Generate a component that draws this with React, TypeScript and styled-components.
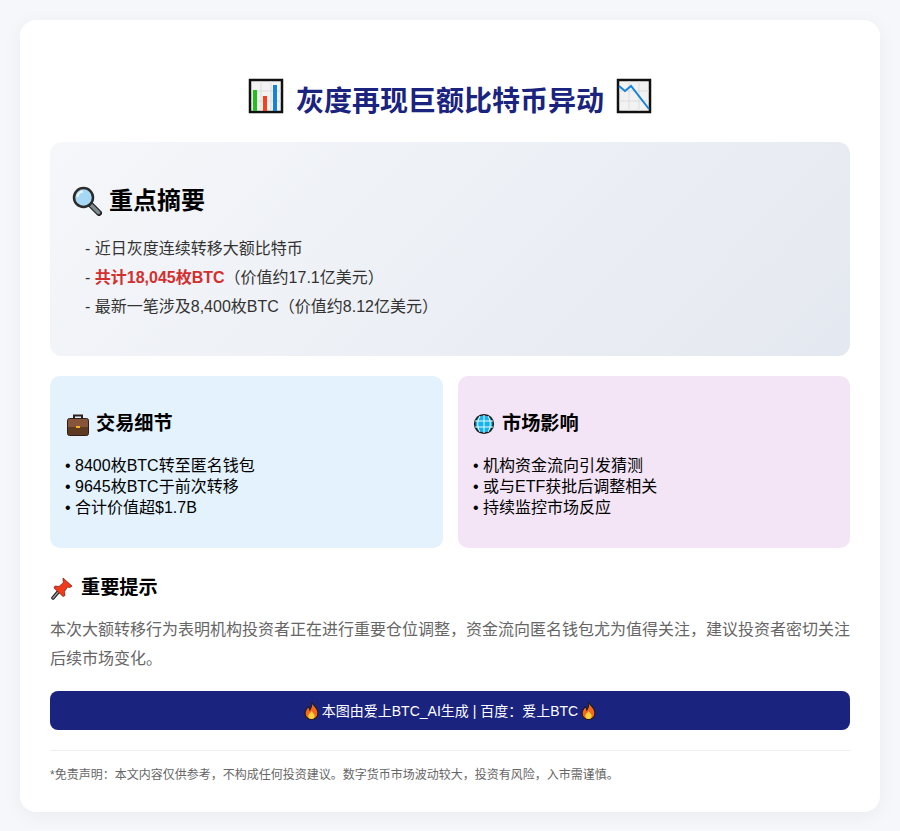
import React, { FC } from 'react'
import styled, { createGlobalStyle } from 'styled-components'

const GlobalStyle = createGlobalStyle`
  html, body { margin: 0; padding: 0; }
  body {
    background: #f5f7fa;
    font-family: "Liberation Sans", "Noto Sans CJK SC", sans-serif;
  }
`

const Page = styled.div`
  padding: 20px;
`

const Card = styled.div`
  background: #fff;
  border-radius: 16px;
  box-shadow: 0 4px 20px rgba(0, 0, 0, 0.05);
  padding: 30px;
  height: 792px;
  box-sizing: border-box;
`

const Title = styled.h1`
  margin: 0;
  height: 92px;
  padding-top: 12px;
  box-sizing: border-box;
  display: flex;
  justify-content: center;
  align-items: center;
  gap: 12px;
  font-size: 28px;
  line-height: 40px;
  font-weight: 700;
  color: #1a237e;

  svg {
    margin-top: -12px;
  }
`

const Summary = styled.section`
  height: 214px;
  box-sizing: border-box;
  padding: 41px 22px 0;
  border-radius: 12px;
  background: linear-gradient(135deg, #f5f7fa 0%, #e4e8f0 100%);
`

const SummaryHeading = styled.h2`
  margin: 0 0 16px;
  display: flex;
  align-items: center;
  gap: 7px;
  font-size: 24px;
  line-height: 36px;
  font-weight: 700;
  color: #000;
`

const SummaryLine = styled.div`
  margin-left: 13px;
  font-size: 16px;
  line-height: 28.8px;
  color: #333;
`

const Red = styled.strong`
  color: #d32f2f;
`

const Columns = styled.div`
  display: grid;
  grid-template-columns: 393px 392px;
  gap: 15px;
  margin-top: 20px;
`

const InfoCard = styled.section<{ $bg: string }>`
  height: 172px;
  box-sizing: border-box;
  padding: 33px 15px 0;
  border-radius: 10px;
  background: ${p => p.$bg};
`

const InfoHeading = styled.h3`
  margin: 0 0 18px;
  display: flex;
  align-items: center;
  gap: 7px;
  font-size: 19.2px;
  line-height: 29px;
  font-weight: 700;
  color: #000;
`

const InfoLine = styled.div`
  font-size: 16px;
  line-height: 20.8px;
  color: #000;
`

const Notice = styled.section`
  margin-top: 26px;
`

const NoticeHeading = styled.h3`
  margin: 0 0 14px;
  display: flex;
  align-items: center;
  gap: 8px;
  font-size: 19.2px;
  line-height: 28px;
  font-weight: 700;
  color: #000;
`

const NoticeText = styled.p`
  margin: 0;
  font-size: 16px;
  line-height: 28.8px;
  color: #666;
`

const Banner = styled.div`
  margin-top: 17px;
  height: 39px;
  border-radius: 8px;
  background: #1a237e;
  color: #fff;
  font-size: 14px;
  display: flex;
  align-items: center;
  justify-content: center;
  gap: 3px;
`

const Disclaimer = styled.div`
  margin-top: 20px;
  padding-top: 16px;
  border-top: 1px solid #eee;
  font-size: 12px;
  line-height: 16px;
  color: #666;
`

const BarsIcon: FC = () => (
  <svg width="36" height="36" viewBox="0 0 36 36">
    <rect x="2" y="2" width="32" height="32" fill="#f2f2f2" stroke="#111" strokeWidth="2.500" />
    <path d="M13 3v30M23 3v30M3 13h30M3 23h30" stroke="#ddd" strokeWidth="1" />
    <rect x="5" y="12" width="4" height="21" fill="#22c01a" />
    <rect x="15" y="18" width="4" height="15" fill="#f4401c" />
    <rect x="25" y="7" width="4" height="26" fill="#1583dc" />
  </svg>
)

const TrendIcon: FC = () => (
  <svg width="36" height="36" viewBox="0 0 36 36">
    <rect x="2" y="2" width="32" height="32" fill="#f2f2f2" stroke="#111" strokeWidth="2.500" />
    <path d="M13 3v30M23 3v30M3 13h30M3 23h30" stroke="#ddd" strokeWidth="1" />
    <path d="M3 8l6 5 6-5 18 23" fill="none" stroke="#1583dc" strokeWidth="2" />
  </svg>
)

const SearchIcon: FC = () => (
  <svg width="30" height="30" viewBox="0 0 30 30">
    <path d="M18 18l9 9" stroke="#222" strokeWidth="6" strokeLinecap="round" />
    <path d="M19 19l7.500 7.500" stroke="#7d8a90" strokeWidth="3.500" strokeLinecap="round" />
    <circle cx="11.500" cy="11.500" r="9.500" fill="#a6d8f5" stroke="#2b2b2b" strokeWidth="2.500" />
    <path d="M5.500 11a6 6 0 0 1 5.500-5.500" fill="none" stroke="#eaf8ff" strokeWidth="2" />
  </svg>
)

const CaseIcon: FC = () => (
  <svg width="24" height="24" viewBox="0 0 24 24">
    <path d="M9 7V3.500h8V7" fill="none" stroke="#2e2018" strokeWidth="2" />
    <rect x="2.500" y="6.500" width="21" height="17" rx="2" fill="#5f3a22" stroke="#2e2018" />
    <path d="M3 9a2 2 0 0 1 2-2h16a2 2 0 0 1 2 2v6H3z" fill="#86553a" />
    <rect x="11" y="14" width="4" height="2" fill="#f5b120" />
  </svg>
)

const GlobeIcon: FC = () => (
  <svg width="22" height="22" viewBox="0 0 22 22">
    <circle cx="11" cy="11" r="9.300" fill="#16b4ee" stroke="#1c1c1c" strokeWidth="1.600" />
    <path d="M2 8h18M2 14h18M11 2v18M7 3c-3 5-3 11 0 16M15 3c3 5 3 11 0 16" fill="none" stroke="#e8f8ff" />
  </svg>
)

const PinIcon: FC = () => (
  <svg width="23" height="23" viewBox="0 0 23 23">
    <path d="M9 14l-6 7" stroke="#1c1c1c" strokeWidth="3.500" strokeLinecap="round" />
    <path d="M9 14l-6 7" stroke="#9a9a9a" strokeWidth="1.500" strokeLinecap="round" />
    <path d="M13 1l9 8-2 1.500-2.500-.5-3 4.500.5 4-2 1L4 11l1-2 4 .5 4.500-4-.5-2.500z" fill="#f03a1c" stroke="#7a170a" strokeWidth=".7" />
  </svg>
)

const FireIcon: FC = () => (
  <svg width="15" height="19" viewBox="0 0 14 17">
    <path d="M7 .5c1 3 6 5 6 10.500a6 6 0 0 1-12 0c0-3 2-4 2.500-6C5 6 5.500 7 5.500 8 7 6 7.500 3 7 .5z" fill="#f4691c" stroke="#1c1c1c" />
    <path d="M7 9c1 2 3 2.500 3 4.500a3 3 0 0 1-6 0C4 12 6 11 7 9z" fill="#fbd13c" />
  </svg>
)

const App: FC = () => {
  return (
    <>
      <GlobalStyle />
      <Page>
        <Card>
          <Title><BarsIcon />灰度再现巨额比特币异动<TrendIcon /></Title>
          <Summary>
            <SummaryHeading><SearchIcon />重点摘要</SummaryHeading>
            <SummaryLine>- 近日灰度连续转移大额比特币</SummaryLine>
            <SummaryLine>- <Red>共计18,045枚BTC</Red>（价值约17.1亿美元）</SummaryLine>
            <SummaryLine>- 最新一笔涉及8,400枚BTC（价值约8.12亿美元）</SummaryLine>
          </Summary>
          <Columns>
            <InfoCard $bg="#e3f2fd">
              <InfoHeading><CaseIcon />交易细节</InfoHeading>
              <InfoLine>• 8400枚BTC转至匿名钱包</InfoLine>
              <InfoLine>• 9645枚BTC于前次转移</InfoLine>
              <InfoLine>• 合计价值超$1.7B</InfoLine>
            </InfoCard>
            <InfoCard $bg="#f3e5f5">
              <InfoHeading><GlobeIcon />市场影响</InfoHeading>
              <InfoLine>• 机构资金流向引发猜测</InfoLine>
              <InfoLine>• 或与ETF获批后调整相关</InfoLine>
              <InfoLine>• 持续监控市场反应</InfoLine>
            </InfoCard>
          </Columns>
          <Notice>
            <NoticeHeading><PinIcon />重要提示</NoticeHeading>
            <NoticeText>本次大额转移行为表明机构投资者正在进行重要仓位调整，资金流向匿名钱包尤为值得关注，建议投资者密切关注后续市场变化。</NoticeText>
          </Notice>
          <Banner><FireIcon />本图由爱上BTC_AI生成 | 百度：爱上BTC<FireIcon /></Banner>
          <Disclaimer>*免责声明：本文内容仅供参考，不构成任何投资建议。数字货币市场波动较大，投资有风险，入市需谨慎。</Disclaimer>
        </Card>
      </Page>
    </>
  )
}

export default App
